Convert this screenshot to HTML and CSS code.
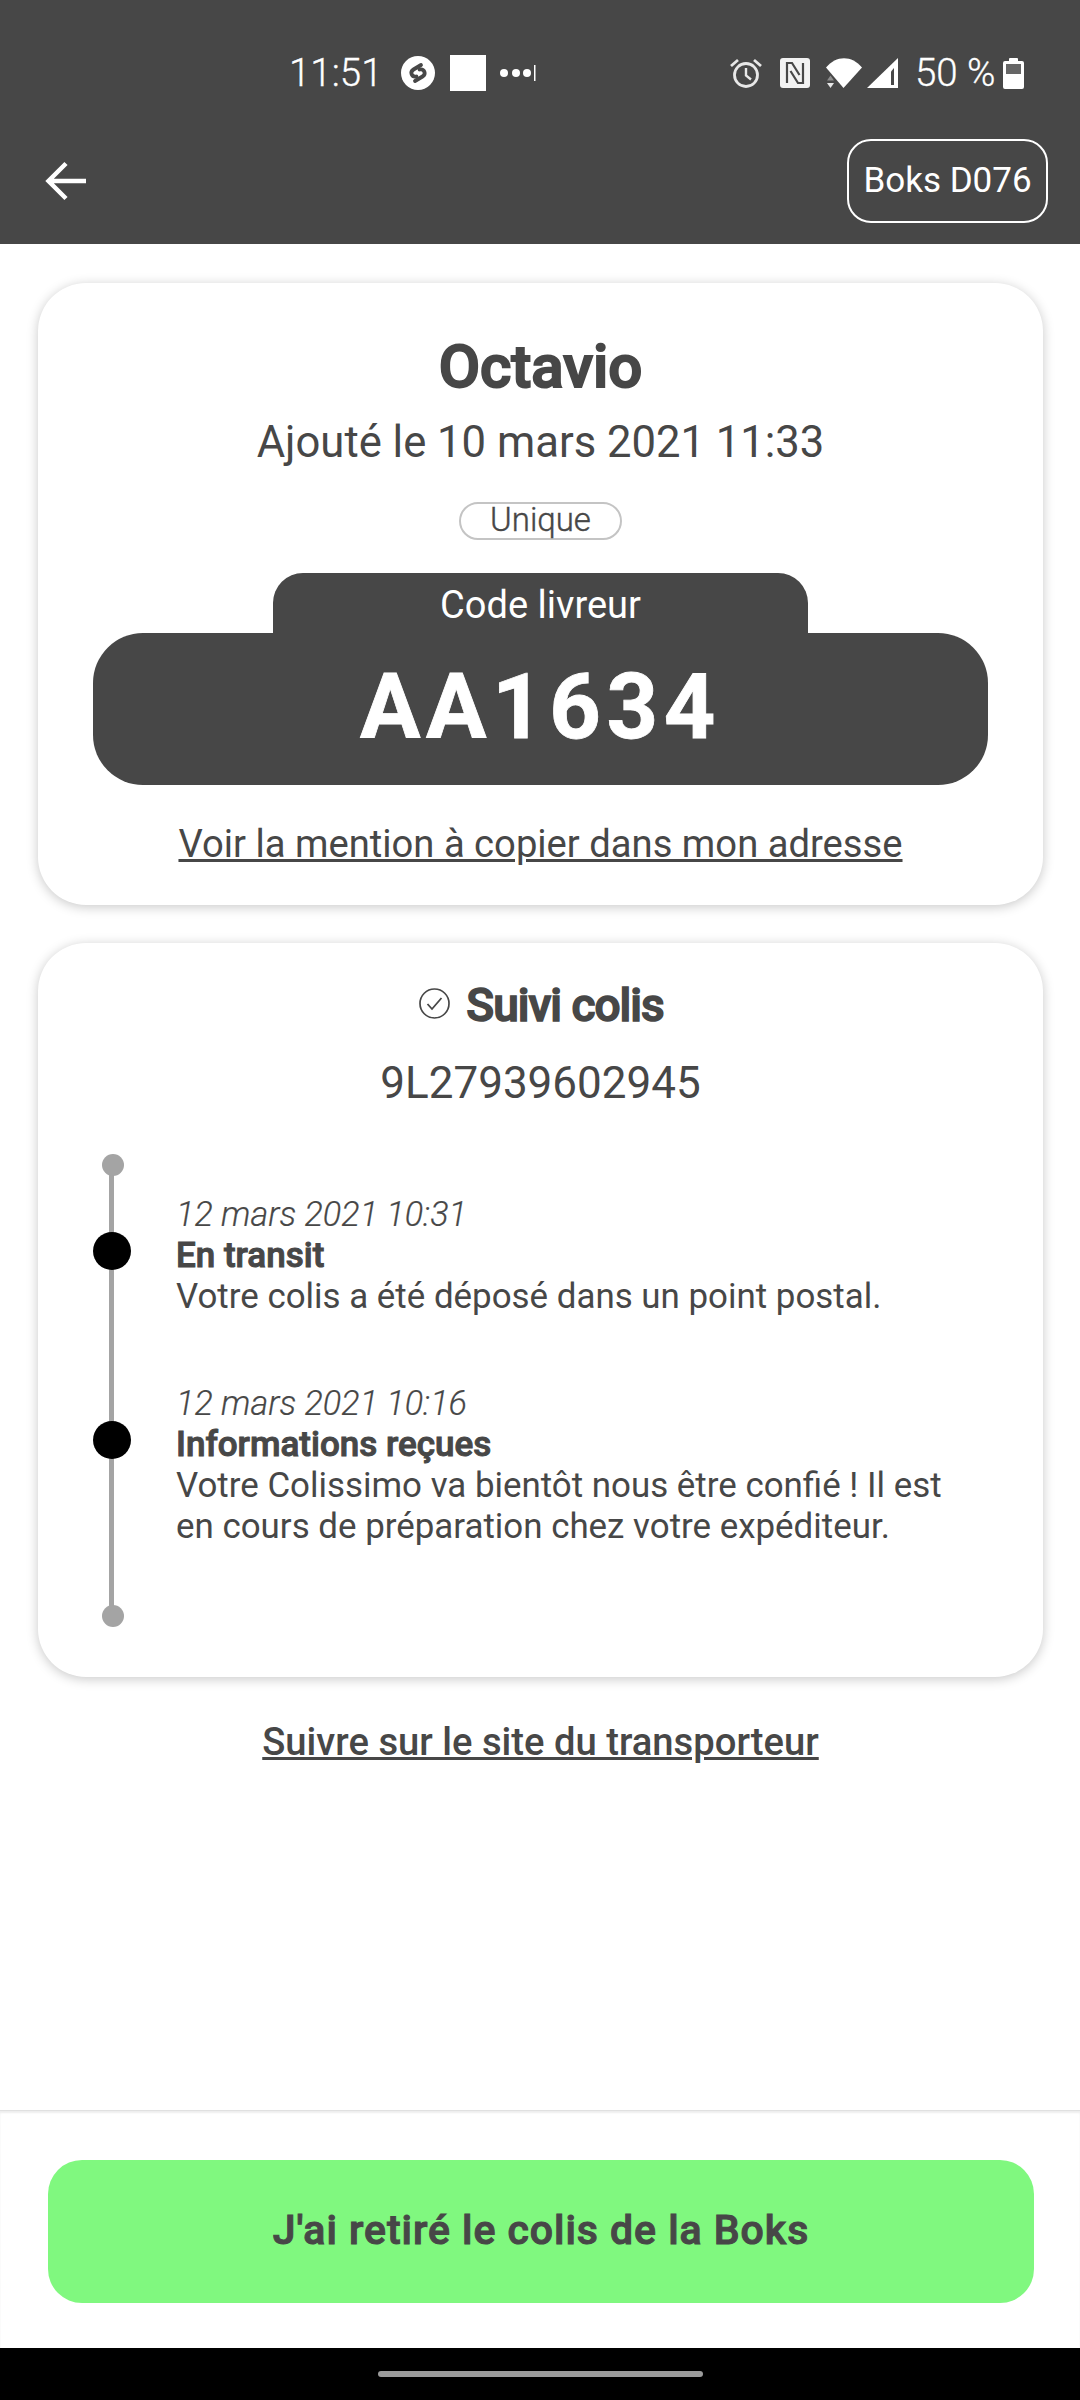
FILE: index.html
```html
<!DOCTYPE html>
<html lang="fr">
<head>
<meta charset="utf-8">
<title>Octavio</title>
<link rel="stylesheet" href="styles.css">
</head>
<body>
<div class="app">
  <header class="header">
    <div class="status">
      <div class="status-left">
        <span class="time">11:51</span>
        <svg class="ic-shazam" viewBox="0 0 34 34"><circle cx="17" cy="17" r="17" fill="#fff"/><path d="M20 9 L12.500 13.500 C8.500 16 10.500 21.500 15.500 20.500" fill="none" stroke="#474747" stroke-width="3.800" stroke-linecap="round"/><path d="M14 25 L21.500 20.500 C25.500 18 23.500 12.500 18.500 13.500" fill="none" stroke="#474747" stroke-width="3.800" stroke-linecap="round"/></svg>
        <span class="ic-square"></span>
        <svg class="ic-more" viewBox="0 0 36 16"><circle cx="4" cy="8" r="4" fill="#fff"/><circle cx="16" cy="8" r="4" fill="#fff"/><circle cx="27" cy="8" r="4" fill="#fff"/><rect x="34" y="0" width="1.5" height="16" fill="#fff"/></svg>
      </div>
      <div class="status-right">
        <svg class="ic-alarm" viewBox="0 0 32 30"><circle cx="16" cy="17" r="11.500" fill="none" stroke="#e8e8e8" stroke-width="2.800"/><path d="M16 10v7.500l5 4" fill="none" stroke="#e8e8e8" stroke-width="2.400"/><path d="M1 8l7-6M31 8l-7-6" fill="none" stroke="#e8e8e8" stroke-width="2.800"/></svg>
        <svg class="ic-nfc" viewBox="0 0 30 30"><rect width="30" height="30" rx="3" fill="#f2f2f2"/><path d="M7 25V5h5l7.500 12" fill="none" stroke="#474747" stroke-width="2.200"/><path d="M23 5v20h-5L10.500 13" fill="none" stroke="#474747" stroke-width="2.200"/></svg>
        <svg class="ic-wifi" viewBox="0 0 36 30"><path d="M0 9.500 C10 -3 26 -3 36 9.500 L17.500 30z" fill="#fff"/><path d="M1 22.500l3.500 -5 3.500 5z" fill="#8d8d8d"/><path d="M1 25h7l-3.500 5z" fill="#e6e6e6"/></svg>
        <svg class="ic-signal" viewBox="0 0 31 30"><path d="M31 0V30H0z" fill="#fff"/><path d="M24 27V13.500L27 10V27z" fill="#474747"/></svg>
        <span class="battery-text">50 %</span>
        <svg class="ic-battery" viewBox="0 0 21 31"><path d="M7 0h7a1 1 0 0 1 1 1v2h4a2 2 0 0 1 2 2v24a2 2 0 0 1-2 2H2a2 2 0 0 1-2-2V5a2 2 0 0 1 2-2h4V1a1 1 0 0 1 1-1z" fill="#fff"/><rect x="3" y="6" width="15" height="10" fill="#666"/></svg>
      </div>
    </div>
    <div class="toolbar">
      <svg class="ic-back" viewBox="0 0 42 40"><path d="M41 20H4M21 2.500 3.500 20 21 37.500" fill="none" stroke="#fff" stroke-width="4.500"/></svg>
      <button class="boks-btn">Boks D076</button>
    </div>
  </header>

  <main class="content">
    <section class="card card-code">
      <h1 class="title">Octavio</h1>
      <p class="subtitle">Ajouté le 10 mars 2021 11:33</p>
      <span class="pill">Unique</span>
      <div class="code-tab">Code livreur</div>
      <div class="code-main">AA1634</div>
      <a class="link link-mention">Voir la mention à copier dans mon adresse</a>
    </section>

    <section class="card card-track">
      <h2 class="track-title">
        <svg class="ic-check" viewBox="0 0 31 31"><circle cx="15.500" cy="15.500" r="14.500" fill="none" stroke="#474747" stroke-width="1.700"/><path d="M8.500 16l4.500 5 9.500-11" fill="none" stroke="#474747" stroke-width="1.800"/></svg>
        <span>Suivi colis</span>
      </h2>
      <p class="track-number">9L27939602945</p>
      <div class="timeline">
        <span class="tl-line"></span>
        <span class="tl-end tl-top"></span>
        <span class="tl-end tl-bottom"></span>
        <article class="event">
          <span class="tl-dot"></span>
          <div class="event-date">12 mars 2021 10:31</div>
          <div class="event-title">En transit</div>
          <div class="event-text">Votre colis a été déposé dans un point postal.</div>
        </article>
        <article class="event">
          <span class="tl-dot"></span>
          <div class="event-date">12 mars 2021 10:16</div>
          <div class="event-title">Informations reçues</div>
          <div class="event-text">Votre Colissimo va bientôt nous être confié ! Il est en cours de préparation chez votre expéditeur.</div>
        </article>
      </div>
    </section>

    <a class="link link-carrier">Suivre sur le site du transporteur</a>
  </main>

  <footer class="footer">
    <button class="cta">J'ai retiré le colis de la Boks</button>
  </footer>
  <div class="navbar"><span class="home-bar"></span></div>
</div>
</body>
</html>
```
FILE: styles.css
```css
* { box-sizing: border-box; }
html, body { margin: 0; padding: 0; }
body {
  width: 1080px;
  height: 2400px;
  overflow: hidden;
  background: #fff;
  color: #474747;
  font-family: Roboto, "Noto Sans", sans-serif;
}
.app { display: flex; flex-direction: column; height: 2400px; }

.header { height: 244px; background: #474747; color: #fff; flex: none; }
.status {
  display: flex;
  justify-content: space-between;
  align-items: flex-start;
  height: 139px;
  padding: 52px 56px 0 289px;
  font-size: 38.500px;
  font-weight: 300;
}
.status-left, .status-right { display: flex; align-items: center; height: 42px; }
.time { line-height: 42px; width: 112px; -webkit-text-stroke: .3px #fff; }
.ic-shazam { width: 34px; height: 34px; }
.ic-square { width: 36px; height: 36px; background: #fff; margin-left: 15px; }
.ic-more { width: 36px; height: 16px; margin-left: 14px; }
.ic-alarm { width: 32px; height: 30px; }
.ic-nfc { width: 30px; height: 30px; margin-left: 18px; }
.ic-wifi { width: 36px; height: 30px; margin-left: 16px; }
.ic-signal { width: 31px; height: 30px; margin-left: 5px; }
.battery-text { margin-left: 17px; line-height: 42px; width: 88px; -webkit-text-stroke: .3px #fff; }
.ic-battery { width: 21px; height: 31px; }

.toolbar {
  display: flex;
  justify-content: space-between;
  align-items: center;
  height: 84px;
  padding: 0 32px 0 45px;
}
.ic-back { width: 42px; height: 40px; }
.boks-btn {
  width: 201px;
  height: 84px;
  padding: 0 0 2px;
  border: 2px solid #fff;
  border-radius: 24px;
  background: transparent;
  color: #fff;
  font: 400 35px/1 Roboto, sans-serif;
}

.content {
  flex: 1;
  display: flex;
  flex-direction: column;
  align-items: center;
  padding: 39px 37px 0 38px;
}
.card {
  width: 100%;
  background: #fff;
  border-radius: 48px;
  box-shadow: 0 2px 12px rgba(0, 0, 0, .22);
  display: flex;
  flex-direction: column;
  align-items: center;
}
.card-code { height: 622px; padding-top: 51px; }
.title {
  margin: 0;
  font-size: 60px;
  font-weight: 500;
  line-height: 66px;
  -webkit-text-stroke: 2px #474747;
}
.subtitle { margin: 18px 0 0; font-size: 43.600px; line-height: 50px; font-weight: 400; }
.pill {
  margin-top: 34px;
  width: 163px;
  height: 38px;
  border: 2px solid #c4c4c4;
  border-radius: 19px;
  text-align: center;
  font-size: 33px;
  font-weight: 300;
  line-height: 32px;
  -webkit-text-stroke: .4px #474747;
}
.code-tab {
  margin-top: 33px;
  width: 535px;
  height: 60px;
  background: #474747;
  border-radius: 30px 30px 0 0;
  color: #fff;
  text-align: center;
  font-size: 38px;
  line-height: 64px;
}
.code-main {
  width: 895px;
  height: 152px;
  border-radius: 50px;
  background: #474747;
  color: #fff;
  text-align: center;
  font-size: 90px;
  font-weight: 700;
  letter-spacing: 5.600px;
  line-height: 150px;
  -webkit-text-stroke: .8px #fff;
}
.link { text-decoration: underline; font-size: 38.200px; line-height: 50px; color: #474747; }
.link-mention { margin-top: 34px; }

.card-track { height: 734px; margin-top: 38px; padding: 32px 55px 0; }
.track-title {
  margin: 0;
  padding-left: 2px;
  display: flex;
  align-items: center;
  gap: 16px;
  font-size: 46px;
  font-weight: 500;
  line-height: 60px;
  letter-spacing: -1px;
  -webkit-text-stroke: 1.500px #474747;
}
.ic-check { width: 31px; height: 31px; margin-top: -4px; }
.track-number { margin: 23px 0 0; font-size: 44px; line-height: 50px; font-weight: 400; }
.timeline {
  position: relative;
  width: 100%;
  margin-top: 46px;
  padding: 40px 30px 80px 83px;
  display: flex;
  flex-direction: column;
  gap: 66px;
}
.tl-line {
  position: absolute;
  left: 16px;
  top: 11px;
  bottom: 11px;
  width: 5px;
  background: #a4a4a4;
}
.tl-end {
  position: absolute;
  left: 9px;
  width: 22px;
  height: 22px;
  border-radius: 50%;
  background: #a4a4a4;
}
.tl-top { top: 0; }
.tl-bottom { bottom: 0; }
.event { position: relative; font-size: 34.900px; line-height: 41px; }
.tl-dot {
  position: absolute;
  left: -83px;
  top: 38px;
  width: 38px;
  height: 38px;
  border-radius: 50%;
  background: #000;
}
.event-date { font-size: 34.200px; font-style: italic; font-weight: 300; -webkit-text-stroke: .2px #474747; }
.event-title { font-size: 35px; font-weight: 500; -webkit-text-stroke: 1px #474747; }

.link-carrier { margin-top: 40px; font-weight: 500; }

.footer {
  flex: none;
  height: 238px;
  border-top: 1px solid #e0e0e0;
  box-shadow: inset 0 2px 2px #eeeeee;
  padding: 49px 46px 0 48px;
}
.cta {
  width: 100%;
  height: 143px;
  padding: 0 0 2px;
  border: 0;
  border-radius: 34px;
  background: #80f87f;
  color: #474747;
  font: 500 41px/1 Roboto, sans-serif;
  letter-spacing: .95px;
  -webkit-text-stroke: 1px #474747;
}
.navbar {
  flex: none;
  height: 52px;
  background: #000;
  display: flex;
  justify-content: center;
  padding-top: 23px;
}
.home-bar { width: 325px; height: 6px; border-radius: 3px; background: #9b9b9b; }
```
